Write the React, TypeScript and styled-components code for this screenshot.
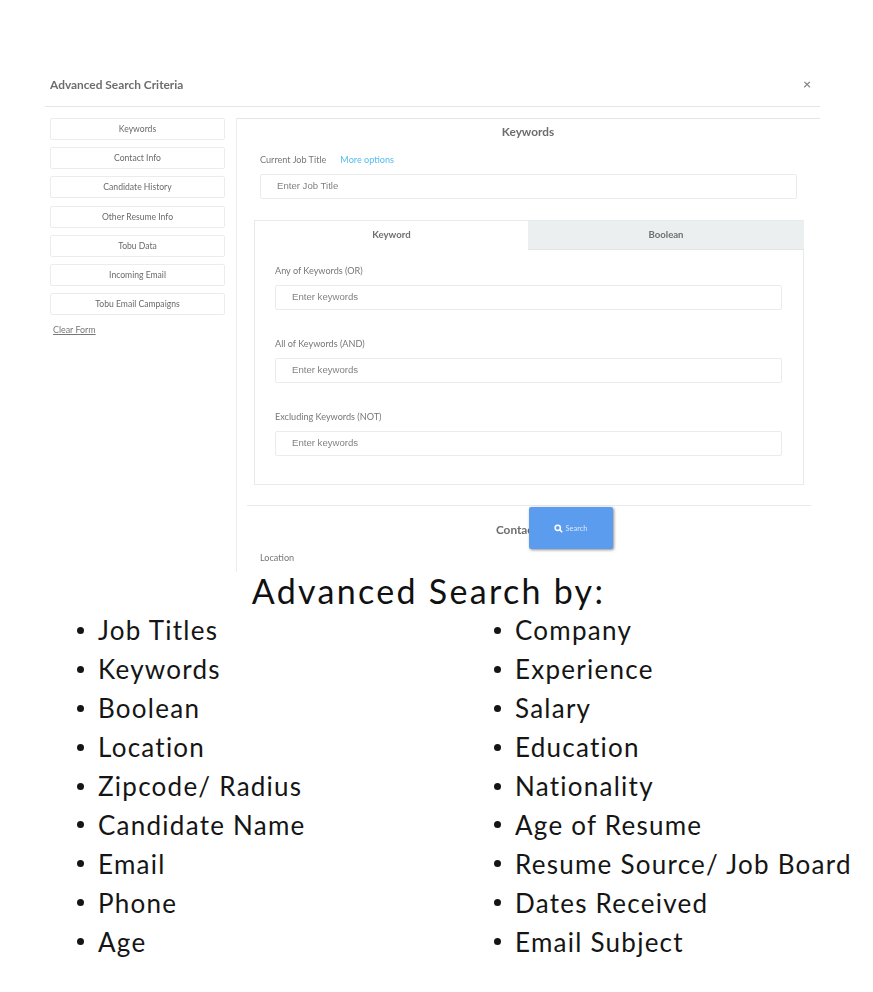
import React from "react";
import styled, { createGlobalStyle } from "styled-components";

const Global = createGlobalStyle`
  html, body { margin: 0; padding: 0; background: #fff; }
  * { box-sizing: border-box; }
`;
const Page = styled.div`
  width: 873px;
  height: 992px;
  overflow: hidden;
  padding-top: 72px;
  font-family: "Lato", "Liberation Sans", sans-serif;
`;
const Shot = styled.div`
  position: relative;
  width: 820px;
  height: 500px;
  overflow: hidden;
  filter: blur(0.35px);
`;
const Header = styled.div`
  margin-left: 45px;
  width: 775px;
  height: 35px;
  border-bottom: 1px solid #e3e6e6;
  padding-left: 5px;
  display: flex;
  justify-content: space-between;
`;
const Title = styled.div`
  font-size: 11.9px;
  font-weight: 700;
  color: #6d6d6d;
  line-height: 26px;
`;
const Close = styled.div`
  font-size: 14px;
  font-weight: 700;
  color: #8a8a8a;
  line-height: 24px;
  padding-right: 9px;
`;
const Body = styled.div`
  display: flex;
  margin-top: 11px;
  padding-left: 50px;
`;
const Side = styled.div`
  width: 175px;
  flex: none;
  display: flex;
  flex-direction: column;
  gap: 7.2px;
`;
const SideBtn = styled.div`
  height: 22px;
  border: 1px solid #ebeded;
  border-radius: 2px;
  font-size: 8.6px;
  color: #6a6a6a;
  text-align: center;
  line-height: 20px;
`;
const Clear = styled.a`
  font-size: 8.9px;
  color: #777;
  text-decoration: underline;
  margin: 2px 0 0 3px;
`;
const Panel = styled.div`
  margin-left: 11px;
  width: 584px;
  height: 454px;
  border-top: 1px solid #e3e6e6;
  border-left: 1px solid #eceeee;
  position: relative;
`;
const PanelTitle = styled.div`
  text-align: center;
  font-size: 11.8px;
  font-weight: 700;
  color: #6d6d6d;
  line-height: 26px;
  margin-left: -1px;
`;
const Label = styled.div`
  font-size: 9.1px;
  color: #777;
  line-height: 12px;
`;
const LabelRow = styled.div`
  margin: 9px 0 0 23px;
  display: flex;
  gap: 14px;
`;
const More = styled.span`
  font-size: 9.1px;
  color: #55bdee;
  line-height: 12px;
`;
const Input = styled.div<{ $w: number }>`
  width: ${(p) => p.$w}px;
  height: 25px;
  margin-top: 8px;
  border: 1px solid #e8ecec;
  border-radius: 2px;
  padding-left: 16px;
  font-family: "Liberation Sans", sans-serif;
  font-size: 9.6px;
  color: #828282;
  line-height: 22px;
`;
const JobInput = styled(Input)`
  margin: 8px 0 0 23px;
`;
const TabBox = styled.div`
  margin: 21px 0 0 17px;
  width: 550px;
  height: 265px;
  border: 1px solid #e6eaea;
`;
const Tabs = styled.div`
  display: flex;
  height: 29px;
  margin-right: -1px;
`;
const Tab = styled.div<{ $on?: boolean }>`
  flex: ${(p) => (p.$on ? "0 0 273px" : "1")};
  background: ${(p) => (p.$on ? "#fff" : "#ebefef")};
  border-bottom: ${(p) => (p.$on ? "none" : "1px solid #e0e5e5")};
  text-align: center;
  font-size: 9.6px;
  font-weight: 700;
  color: #707070;
  line-height: 28px;
`;
const Field = styled.div`
  margin-left: 20px;
  padding-top: 15px;
  height: 73.2px;
`;
const Divider = styled.div`
  margin: 20px 0 0 10px;
  width: 564px;
  height: 1px;
  background: #e8eaea;
`;
const Section = styled.div`
  text-align: center;
  font-size: 11.8px;
  font-weight: 700;
  color: #6d6d6d;
  line-height: 14px;
  margin-top: 17px;
`;
const LocationLabel = styled(Label)`
  margin: 15px 0 0 23px;
`;
const SearchBtn = styled.div`
  position: absolute;
  left: 292px;
  top: 388px;
  width: 84px;
  height: 42px;
  background: #5b9cef;
  border-radius: 2px;
  box-shadow: 1px 1px 3px rgba(0, 0, 0, 0.45);
  color: #d8e7fb;
  font-size: 7.5px;
  display: flex;
  align-items: center;
  justify-content: center;
  gap: 2px;
`;
const Heading = styled.h1`
  margin: 0;
  font-family: "Lato", sans-serif;
  font-weight: 400;
  font-size: 34px;
  line-height: 38px;
  letter-spacing: 2.3px;
  color: #111;
  text-align: center;
  width: 857px;
`;
const Columns = styled.div`
  display: flex;
  margin-top: 1px;
`;
const List = styled.ul<{ $w: number; $pad: number }>`
  margin: 0;
  padding: 0 0 0 ${(p) => p.$pad}px;
  width: ${(p) => p.$w}px;
  list-style: none;
  flex: none;
`;
const Item = styled.li`
  display: flex;
  align-items: center;
  height: 38.9px;
  font-size: 26px;
  letter-spacing: 1.25px;
  color: #151515;
  white-space: nowrap;
  &::before {
    content: "";
    width: 7px;
    height: 7px;
    border-radius: 50%;
    background: #151515;
    margin-right: 14px;
    flex: none;
  }
`;

const left = ["Job Titles", "Keywords", "Boolean", "Location", "Zipcode/ Radius", "Candidate Name", "Email", "Phone", "Age"];
const right = ["Company", "Experience", "Salary", "Education", "Nationality", "Age of Resume", "Resume Source/ Job Board", "Dates Received", "Email Subject"];
const side = ["Keywords", "Contact Info", "Candidate History", "Other Resume Info", "Tobu Data", "Incoming Email", "Tobu Email Campaigns"];
const fields = ["Any of Keywords (OR)", "All of Keywords (AND)", "Excluding Keywords (NOT)"];

export default function App() {
  return (
    <Page>
      <Global />
      <Shot>
        <Header>
          <Title>Advanced Search Criteria</Title>
          <Close>×</Close>
        </Header>
        <Body>
          <Side>
            {side.map((s) => (
              <SideBtn key={s}>{s}</SideBtn>
            ))}
            <Clear>Clear Form</Clear>
          </Side>
          <Panel>
            <PanelTitle>Keywords</PanelTitle>
            <LabelRow>
              <Label>Current Job Title</Label>
              <More>More options</More>
            </LabelRow>
            <JobInput $w={537}>Enter Job Title</JobInput>
            <TabBox>
              <Tabs>
                <Tab $on>Keyword</Tab>
                <Tab>Boolean</Tab>
              </Tabs>
              {fields.map((f) => (
                <Field key={f}>
                  <Label>{f}</Label>
                  <Input $w={507}>Enter keywords</Input>
                </Field>
              ))}
            </TabBox>
            <Divider />
            <Section>Contact Info</Section>
            <LocationLabel>Location</LocationLabel>
            <SearchBtn>
              <svg width="9" height="9" viewBox="0 0 24 24" fill="none" stroke="#fff" strokeWidth="4">
                <circle cx="10" cy="10" r="7" />
                <path d="M15 15l7 7" />
              </svg>
              Search
            </SearchBtn>
          </Panel>
        </Body>
      </Shot>
      <Heading>Advanced Search by:</Heading>
      <Columns>
        <List $w={418} $pad={77}>
          {left.map((s) => (
            <Item key={s}>{s}</Item>
          ))}
        </List>
        <List $w={455} $pad={76}>
          {right.map((s) => (
            <Item key={s}>{s}</Item>
          ))}
        </List>
      </Columns>
    </Page>
  );
}
